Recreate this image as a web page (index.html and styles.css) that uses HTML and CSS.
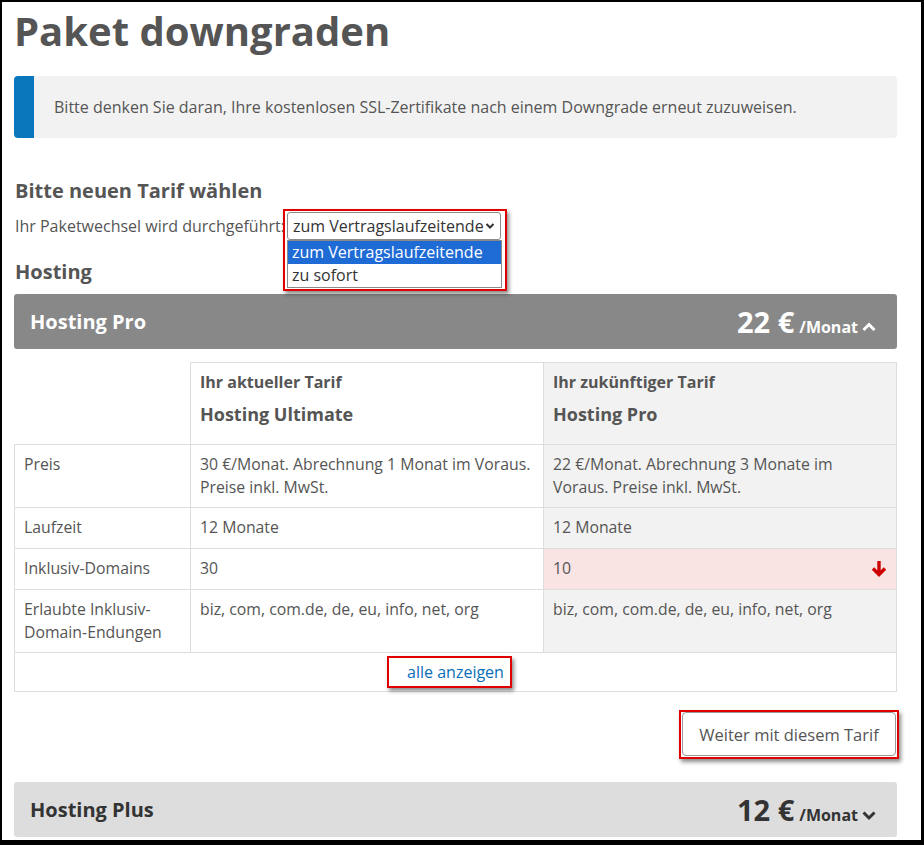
FILE: index.html
```html
<!DOCTYPE html>
<html lang="de">
  <head>
    <meta charset="UTF-8" />
    <meta name="viewport" content="width=device-width, initial-scale=1.0" />
    <title>Paket downgraden</title>
    <link rel="stylesheet" href="styles.css">
  </head>
  <body>
    <div class="page">
      <h1 class="title">Paket downgraden</h1>

      <div class="alert">
        Bitte denken Sie daran, Ihre kostenlosen SSL-Zertifikate nach einem Downgrade erneut zuzuweisen.
      </div>

      <h2 class="section">Bitte neuen Tarif wählen</h2>
      <div class="switch-row">
        <span>Ihr Paketwechsel wird durchgeführt:</span>
        <div class="select-wrap">
          <div class="select">
            <span>zum Vertragslaufzeitende</span>
            <svg width="10" height="8" viewBox="0 0 10 8"><path d="M1.5 2 L5 5.5 L8.5 2" fill="none" stroke="#333" stroke-width="2"/></svg>
          </div>
          <ul class="options">
            <li class="active">zum Vertragslaufzeitende</li>
            <li>zu sofort</li>
          </ul>
        </div>
      </div>

      <h2 class="section group">Hosting</h2>

      <div class="plan-bar open">
        <span class="plan-name">Hosting Pro</span>
        <span class="plan-price">22 € <small>/Monat</small>
          <svg width="16" height="12" viewBox="0 0 16 12"><path d="M2.5 9 L8 3.5 L13.5 9" fill="none" stroke="#fff" stroke-width="3"/></svg>
        </span>
      </div>

      <table class="compare">
        <tr class="head">
          <td class="blank"></td>
          <td>
            <div class="label">Ihr aktueller Tarif</div>
            <div class="name">Hosting Ultimate</div>
          </td>
          <td class="new">
            <div class="label">Ihr zukünftiger Tarif</div>
            <div class="name">Hosting Pro</div>
          </td>
        </tr>
        <tr>
          <td>Preis</td>
          <td>30 €/Monat. Abrechnung 1 Monat im Voraus. Preise inkl. MwSt.</td>
          <td class="new">22 €/Monat. Abrechnung 3 Monate im Voraus. Preise inkl. MwSt.</td>
        </tr>
        <tr class="single">
          <td>Laufzeit</td>
          <td>12 Monate</td>
          <td class="new">12 Monate</td>
        </tr>
        <tr class="single">
          <td>Inklusiv-Domains</td>
          <td>30</td>
          <td class="new worse">
            10
            <svg class="down" width="16" height="18" viewBox="0 0 16 18"><path d="M8 1 V14 M2 8.5 L8 14.5 L14 8.5" fill="none" stroke="#cc0000" stroke-width="3.4"/></svg>
          </td>
        </tr>
        <tr>
          <td>Erlaubte Inklusiv-Domain-Endungen</td>
          <td>biz, com, com.de, de, eu, info, net, org</td>
          <td class="new">biz, com, com.de, de, eu, info, net, org</td>
        </tr>
        <tr>
          <td colspan="3" class="more"><a href="#" class="marked">alle anzeigen</a></td>
        </tr>
      </table>

      <div class="actions">
        <button class="btn">Weiter mit diesem Tarif</button>
      </div>

      <div class="plan-bar">
        <span class="plan-name">Hosting Plus</span>
        <span class="plan-price">12 € <small>/Monat</small>
          <svg width="16" height="12" viewBox="0 0 16 12"><path d="M2.5 3.5 L8 9 L13.5 3.5" fill="none" stroke="#333" stroke-width="3"/></svg>
        </span>
      </div>
    </div>
  </body>
</html>
```

FILE: styles.css
```css
body {
  margin: 0;
  font-family: "Open Sans", "Liberation Sans", sans-serif;
  color: #555;
  background: #000;
}
.page {
  box-sizing: border-box;
  width: 924px;
  height: 845px;
  overflow: hidden;
  background: #fff;
  border-style: solid;
  border-color: #000;
  border-width: 2px 3px 5px 2px;
  padding: 0 24px 0 12px;
  font-size: 16px;
}
.title {
  margin: 3px 0 0 0;
  font-size: 40px;
  line-height: 51px;
  font-weight: 700;
  color: #555;
}
.alert {
  margin-top: 20px;
  background: #f2f2f2;
  border-left: 20px solid #0a77bd;
  border-radius: 4px;
  padding: 20px 20px;
  line-height: 22px;
  font-size: 16px;
}

.section {
  margin: 40px 0 0 1px;
  font-size: 20px;
  line-height: 26px;
  font-weight: 700;
}
.section.group {
  margin-top: 19px;
}
.switch-row {
  display: flex;
  align-items: center;
  gap: 2px;
  margin: 8px 0 0 1px;
  height: 28px;
}
.select-wrap {
  position: relative;
}
/* rote Markierung um Auswahl + Liste */
.select-wrap::after {
  content: "";
  position: absolute;
  left: -4px;
  right: -6px;
  top: -3px;
  bottom: -51px;
  border: 2px solid #e00000;
  box-shadow: 2px 3px 4px rgba(0, 0, 0, 0.45);
  pointer-events: none;
}
.select {
  box-sizing: border-box;
  width: 214px;
  height: 28px;
  border: 1px solid #8a8a8a;
  border-radius: 3px;
  display: flex;
  align-items: center;
  justify-content: space-between;
  padding: 0 5px 0 5px;
  font-size: 16px;
  color: #333;
}
.options {
  position: absolute;
  top: 28px;
  left: 0;
  width: 215px;
  box-sizing: border-box;
  margin: 0;
  padding: 0;
  list-style: none;
  background: #fff;
  border: 1px solid #8a8a8a;
  font-size: 16px;
  color: #333;
  z-index: 2;
}
.options li {
  height: 23px;
  line-height: 23px;
  padding: 0 4px;
}
.options li.active {
  background: #1e6bd6;
  color: #fff;
}

.plan-bar {
  display: flex;
  justify-content: space-between;
  align-items: center;
  margin-top: 9px;
  height: 55px;
  padding: 0 20px 0 16px;
  background: #ddd;
  border-radius: 3px;
  color: #333;
}
.plan-bar.open {
  background: #888;
  color: #fff;
}
.plan-name {
  font-size: 20px;
  font-weight: 700;
}
.plan-price {
  font-size: 29px;
  font-weight: 700;
  display: flex;
  align-items: baseline;
  gap: 5px;
}
.plan-price small {
  font-size: 16px;
}
.plan-price svg {
  margin-left: -2px;
}

.compare {
  width: 100%;
  margin-top: 13px;
  border-collapse: collapse;
  line-height: 23px;
  font-size: 15.8px;
}
.compare td {
  border: 1px solid #ddd;
  padding: 8px 9px 8px;
  vertical-align: top;
}
.compare tr.single td {
  padding-bottom: 9px;
}
.compare td:first-child {
  width: 157px;
}
.compare td:nth-child(2) {
  width: 334px;
}
.compare td.blank {
  border-top: none;
  border-left: none;
}
.compare .new {
  background: #f2f2f2;
}
.compare .worse {
  background: #f9e3e3;
  position: relative;
}
.down {
  position: absolute;
  right: 9px;
  top: 11px;
}
.head .label {
  font-weight: 700;
  font-size: 16px;
}
.head .name {
  font-size: 18px;
  font-weight: 700;
  line-height: 24px;
  margin: 8px 0 10px;
}
.compare td.more {
  text-align: center;
  padding: 8px 9px 7px;
  font-size: 16px;
}
.more a {
  color: #0a6fb8;
  text-decoration: none;
}
.marked {
  position: relative;
}
.marked::after {
  content: "";
  position: absolute;
  left: -20px;
  right: -8px;
  top: -5px;
  bottom: -5px;
  border: 2px solid #e00000;
  box-shadow: 2px 3px 4px rgba(0, 0, 0, 0.45);
}

.actions {
  display: flex;
  justify-content: flex-end;
  margin-top: 20px;
  padding-right: 1px;
}
.btn {
  position: relative;
  width: 214px;
  height: 44px;
  background: #fff;
  border: 1px solid #999;
  border-radius: 4px;
  font-family: inherit;
  font-size: 16.5px;
  color: #555;
}
.btn::after {
  content: "";
  position: absolute;
  left: -4px;
  right: -4px;
  top: -3px;
  bottom: -4px;
  border: 2px solid #e00000;
  box-shadow: 2px 3px 4px rgba(0, 0, 0, 0.45);
}
.actions + .plan-bar {
  margin-top: 26px;
}
```
